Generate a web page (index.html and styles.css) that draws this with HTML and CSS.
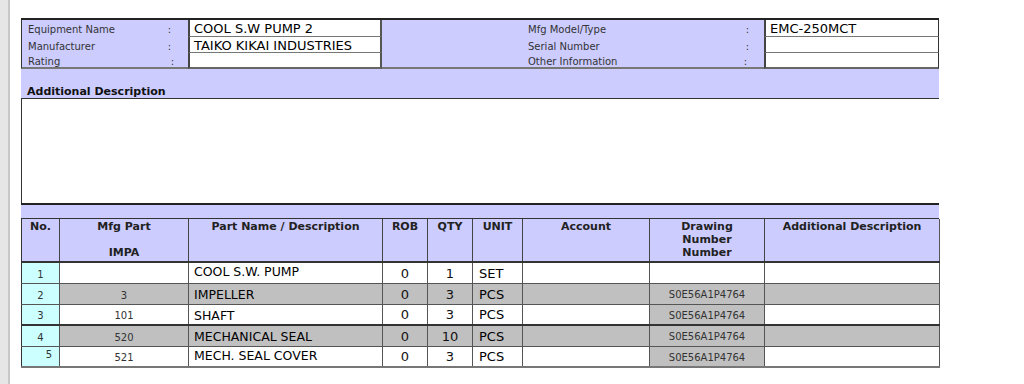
FILE: index.html
```html
<!DOCTYPE html>
<html>
<head>
<meta charset="utf-8">
<link rel="stylesheet" href="styles.css">
</head>
<body>
<div class="page">
  <div class="sidebar"></div>
  <main class="sheet">
    <section class="info">
      <div class="lbl"><span>Equipment Name</span><span class="colon">:</span></div>
      <div class="val">COOL S.W PUMP 2</div>
      <div class="mid"><span>Mfg Model/Type</span><span class="colon">:</span></div>
      <div class="val2">EMC-250MCT</div>

      <div class="lbl"><span>Manufacturer</span><span class="colon">:</span></div>
      <div class="val">TAIKO KIKAI INDUSTRIES</div>
      <div class="mid"><span>Serial Number</span><span class="colon">:</span></div>
      <div class="val2"></div>

      <div class="lbl last"><span>Rating</span><span class="colon shift">:</span></div>
      <div class="val last"></div>
      <div class="mid last"><span>Other Information</span><span class="colon back">:</span></div>
      <div class="val2 last"></div>
    </section>

    <div class="add-band">Additional Description</div>
    <div class="add-box"></div>
    <div class="gap-band"></div>

    <table class="parts">
      <colgroup>
        <col class="c-no"><col class="c-mfg"><col class="c-name"><col class="c-rob"><col class="c-qty"><col class="c-unit"><col class="c-acc"><col class="c-drw"><col class="c-add">
      </colgroup>
      <thead>
        <tr>
          <th>No.</th>
          <th>Mfg Part<br><br>IMPA</th>
          <th>Part Name / Description</th>
          <th>ROB</th>
          <th>QTY</th>
          <th>UNIT</th>
          <th>Account</th>
          <th>Drawing<br>Number<br>Number</th>
          <th>Additional Description</th>
        </tr>
      </thead>
      <tbody>
        <tr class="r-white">
          <td class="no">1</td><td class="mfg"></td><td class="name top">COOL S.W. PUMP</td><td class="num">0</td><td class="num">1</td><td class="unit">SET</td><td></td><td class="drw plain"></td><td></td>
        </tr>
        <tr class="r-gray">
          <td class="no">2</td><td class="mfg">3</td><td class="name">IMPELLER</td><td class="num">0</td><td class="num">3</td><td class="unit">PCS</td><td></td><td class="drw">S0E56A1P4764</td><td></td>
        </tr>
        <tr class="r-white">
          <td class="no">3</td><td class="mfg">101</td><td class="name">SHAFT</td><td class="num">0</td><td class="num">3</td><td class="unit">PCS</td><td></td><td class="drw">S0E56A1P4764</td><td></td>
        </tr>
        <tr class="r-gray thick">
          <td class="no">4</td><td class="mfg">520</td><td class="name">MECHANICAL SEAL</td><td class="num">0</td><td class="num">10</td><td class="unit">PCS</td><td></td><td class="drw">S0E56A1P4764</td><td></td>
        </tr>
        <tr class="r-white">
          <td class="no right">5</td><td class="mfg">521</td><td class="name top">MECH. SEAL COVER</td><td class="num">0</td><td class="num">3</td><td class="unit">PCS</td><td></td><td class="drw">S0E56A1P4764</td><td></td>
        </tr>
      </tbody>
    </table>
  </main>
</div>
</body>
</html>
```

FILE: styles.css
```css
* { box-sizing: border-box; }

body {
  margin: 0;
  font-family: "DejaVu Sans", Verdana, sans-serif;
  background: #fff;
  color: #000;
}

.page {
  display: flex;
  min-height: 384px;
}

.sidebar {
  width: 10px;
  background: #e6e6e6;
  border-right: 2px solid #c8c8c8;
  flex: none;
}

.sheet {
  margin: 18px 0 0 11px;
  width: 918px;
}

/* info block */
.info {
  display: grid;
  grid-template-columns: 167px 194px 382px 175px;
  grid-template-rows: 17px 16px 16px;
  border-top: 2px solid #222;
  background: #ccccff;
}

.lbl, .mid {
  display: flex;
  align-items: center;
  font-size: 10px;
  color: #333;
  padding-top: 2px;
}

.lbl {
  border-left: 1px solid #333;
  padding-left: 6px;
  justify-content: space-between;
  padding-right: 17px;
}

.mid {
  padding-left: 146px;
  padding-right: 15px;
  justify-content: space-between;
}

.colon { display: inline-block; }
.colon.shift { position: relative; left: 3px; }
.colon.back { position: relative; left: -2px; }

.val, .val2 {
  background: #fff;
  font-size: 13px;
  padding-left: 4px;
  padding-top: 1px;
  line-height: 15px;
  border-bottom: 1px solid #777;
  white-space: nowrap;
}

.val {
  border-left: 2px solid #444;
  border-right: 2px solid #555;
}

.val2 {
  border-left: 2px solid #444;
  border-right: 1px solid #333;
}

.lbl.last, .mid.last {
  border-bottom: 2px solid #777;
}

.val.last, .val2.last {
  border-bottom: 2px solid #666;
}

/* additional description */
.add-band {
  height: 30px;
  background: #ccccff;
  font-size: 11px;
  font-weight: bold;
  color: #111;
  padding: 16px 0 0 6px;
  border-bottom: 1px solid #333;
}

.add-box {
  height: 104px;
  border-left: 1px solid #333;
}

.gap-band {
  height: 16px;
  background: #ccccff;
  border-top: 2px solid #222;
  border-bottom: 1px solid #333;
}

/* parts table */
.parts {
  width: 918px;
  border-collapse: collapse;
  table-layout: fixed;
  border-left: 1px solid #333;
}

.c-no { width: 38px; }
.c-mfg { width: 129px; }
.c-name { width: 194px; }
.c-rob { width: 45px; }
.c-qty { width: 45px; }
.c-unit { width: 50px; }
.c-acc { width: 127px; }
.c-drw { width: 115px; }
.c-add { width: 175px; }

.parts th {
  height: 43px;
  background: #ccccff;
  font-size: 11px;
  line-height: 13px;
  font-weight: bold;
  color: #222;
  vertical-align: top;
  padding: 1px 2px 0;
  border: 1px solid #444;
  border-top: 0;
  border-bottom: 2px solid #333;
  text-align: center;
}

.parts td {
  height: 21px;
  border: 1px solid #555;
  padding: 0;
  vertical-align: middle;
}

.parts td:first-child, .parts th:first-child { border-left: 1px solid #333; }
.parts td:last-child, .parts th:last-child { border-right: 1px solid #555; }

.r-white td { background: #fff; }
.r-gray td { background: #c0c0c0; }
.thick td { border-top: 2px solid #333; }
.parts tbody tr:last-child td { border-bottom: 2px solid #777; }

.parts td.no {
  background: #ccffff;
  font-size: 10px;
  color: #333;
  text-align: center;
  padding-top: 3px;
}

.parts td.no.right {
  text-align: right;
  padding-right: 7px;
  vertical-align: top;
  padding-top: 2px;
}

.parts td.mfg {
  font-size: 10px;
  color: #333;
  text-align: center;
  padding-top: 3px;
}

.parts td.name {
  font-size: 12.5px;
  padding-left: 5px;
  padding-top: 2px;
}

.parts td.name.top {
  vertical-align: top;
  padding-top: 1px;
}

.parts td.num {
  font-size: 13px;
  text-align: center;
  color: #111;
  padding-top: 1px;
}

.parts td.unit {
  font-size: 13px;
  padding-left: 6px;
  padding-top: 1px;
}

.parts td.drw {
  background: #c0c0c0;
  font-size: 10px;
  color: #333;
  text-align: center;
  padding-top: 2px;
}

.parts td.drw.plain { background: #fff; }
```
